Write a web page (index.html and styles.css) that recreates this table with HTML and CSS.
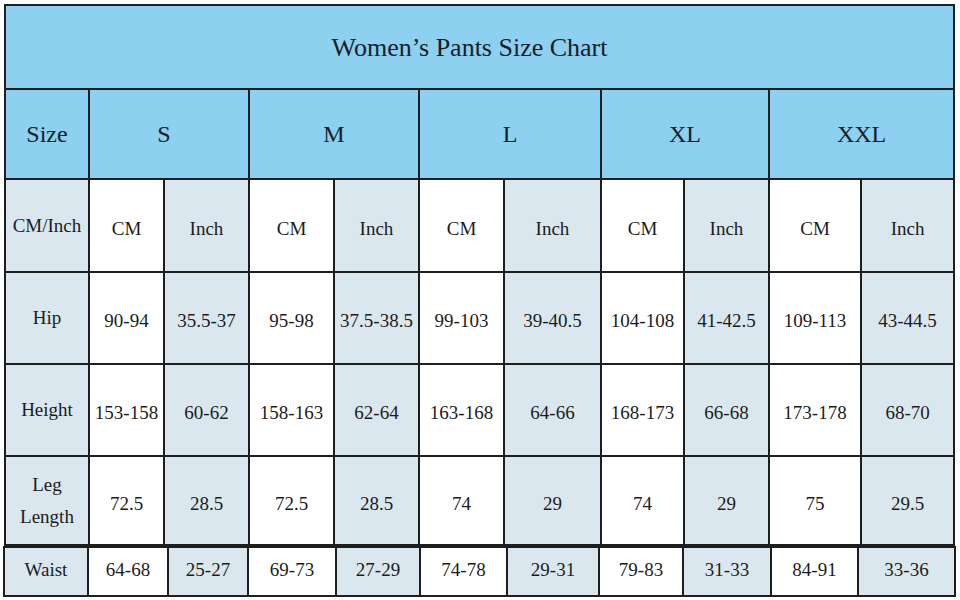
FILE: index.html
```html
<!DOCTYPE html>
<html lang="en">
<head>
<meta charset="utf-8">
<title>Women's Pants Size Chart</title>
<link rel="stylesheet" href="styles.css">
</head>
<body>
<div class="chart">
  <table class="grid main">
    <colgroup>
      <col class="w84"><col class="w75"><col class="w85"><col class="w85"><col class="w85"><col class="w85"><col class="w97"><col class="w83"><col class="w85"><col class="w92"><col class="w93">
    </colgroup>
    <tr class="r-title"><th class="title" colspan="11">Women’s Pants Size Chart</th></tr>
    <tr class="r-head">
      <th class="head">Size</th>
      <th class="head s-head" colspan="2">S</th>
      <th class="head" colspan="2">M</th>
      <th class="head" colspan="2">L</th>
      <th class="head" colspan="2">XL</th>
      <th class="head" colspan="2">XXL</th>
    </tr>
    <tr class="r-unit body">
      <td class="lab">CM/Inch</td>
      <td>CM</td><td class="alt">Inch</td>
      <td>CM</td><td class="alt">Inch</td>
      <td>CM</td><td class="alt">Inch</td>
      <td>CM</td><td class="alt">Inch</td>
      <td>CM</td><td class="alt">Inch</td>
    </tr>
    <tr class="r-hip body">
      <td class="lab">Hip</td>
      <td>90-94</td><td class="alt">35.5-37</td>
      <td>95-98</td><td class="alt">37.5-38.5</td>
      <td>99-103</td><td class="alt">39-40.5</td>
      <td>104-108</td><td class="alt">41-42.5</td>
      <td>109-113</td><td class="alt">43-44.5</td>
    </tr>
    <tr class="r-height body">
      <td class="lab">Height</td>
      <td>153-158</td><td class="alt">60-62</td>
      <td>158-163</td><td class="alt">62-64</td>
      <td>163-168</td><td class="alt">64-66</td>
      <td>168-173</td><td class="alt">66-68</td>
      <td>173-178</td><td class="alt">68-70</td>
    </tr>
    <tr class="r-leg body">
      <td class="lab leg">Leg<br>Length</td>
      <td>72.5</td><td class="alt">28.5</td>
      <td>72.5</td><td class="alt">28.5</td>
      <td>74</td><td class="alt">29</td>
      <td>74</td><td class="alt">29</td>
      <td>75</td><td class="alt">29.5</td>
    </tr>
  </table>
  <table class="grid waist">
    <colgroup>
      <col class="w84"><col class="w80"><col class="w80"><col class="w88"><col class="w84"><col class="w87"><col class="w92"><col class="w84"><col class="w88"><col class="w87"><col class="w97">
    </colgroup>
    <tr class="r-waist">
      <td class="lab">Waist</td>
      <td>64-68</td><td class="alt">25-27</td>
      <td>69-73</td><td class="alt">27-29</td>
      <td>74-78</td><td class="alt">29-31</td>
      <td>79-83</td><td class="alt">31-33</td>
      <td>84-91</td><td class="alt">33-36</td>
    </tr>
  </table>
</div>
</body>
</html>
```

FILE: styles.css
```css
html, body {
  margin: 0;
  padding: 0;
  background: #ffffff;
}

.chart {
  padding: 4px 0 0 4px;
  font-family: "Liberation Serif", "Times New Roman", serif;
  color: #1c1c1c;
}

.grid {
  border-collapse: collapse;
  table-layout: fixed;
}

.grid th,
.grid td {
  border: 2px solid #1e1e1e;
  padding: 0;
  text-align: center;
  vertical-align: middle;
  font-size: 19px;
  font-weight: normal;
  white-space: nowrap;
  background: #ffffff;
}

.main {
  width: 951px;
}

.waist {
  width: 953px;
  margin-left: -1px;
}

.w75 { width: 75px; }
.w80 { width: 80px; }
.w83 { width: 83px; }
.w84 { width: 84px; }
.w85 { width: 85px; }
.w87 { width: 87px; }
.w88 { width: 88px; }
.w92 { width: 92px; }
.w93 { width: 93px; }
.w97 { width: 97px; }

.r-title { height: 84px; }
.r-head { height: 90px; }
.r-unit { height: 93px; }
.r-hip { height: 92px; }
.r-height { height: 92px; }
.r-leg { height: 89px; }
.r-waist { height: 49px; }

.grid .body td {
  padding-top: 6px;
}

.grid .r-waist td {
  padding-bottom: 3px;
}

.grid .title {
  background: #8dd0ef;
  color: #14202b;
  font-size: 26px;
  padding-top: 2px;
  padding-right: 20px;
}

.grid .head {
  background: #8dd0ef;
  color: #14202b;
  font-size: 24px;
}

.grid .s-head {
  padding-right: 10px;
}

.grid .lab,
.grid .alt {
  background: #dbe7ef;
}

.grid .body .lab {
  padding-top: 0;
}

.grid .leg {
  line-height: 32px;
  white-space: normal;
  padding-top: 0;
}
```
